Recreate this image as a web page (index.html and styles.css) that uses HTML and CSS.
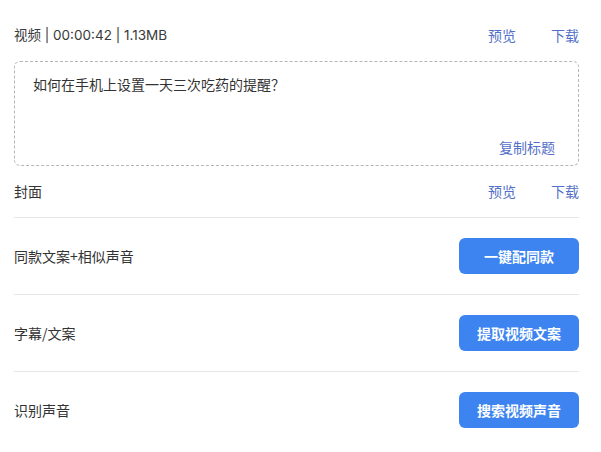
FILE: index.html
```html
<!DOCTYPE html>
<html lang="zh">
<head>
<meta charset="utf-8">
<link rel="stylesheet" href="styles.css">
</head>
<body>
<div class="panel">
  <div class="head-row">
    <span class="meta">视频 | 00:00:42 | 1.13MB</span>
    <div class="links"><a class="link">预览</a><a class="link">下载</a></div>
  </div>
  <div class="title-box">
    <p class="title-text">如何在手机上设置一天三次吃药的提醒？</p>
    <a class="link copy">复制标题</a>
  </div>
  <div class="cover-row">
    <span class="label">封面</span>
    <div class="links"><a class="link">预览</a><a class="link">下载</a></div>
  </div>
  <div class="row">
    <span class="label">同款文案+相似声音</span>
    <button class="btn">一键配同款</button>
  </div>
  <div class="row">
    <span class="label">字幕/文案</span>
    <button class="btn">提取视频文案</button>
  </div>
  <div class="row">
    <span class="label">识别声音</span>
    <button class="btn">搜索视频声音</button>
  </div>
</div>
</body>
</html>
```
FILE: styles.css
```css
html, body {
  margin: 0;
  padding: 0;
  background: #ffffff;
}
body {
  font-family: "Noto Sans CJK SC", "Noto Sans", sans-serif;
  color: #333333;
  font-size: 14px;
}
.panel {
  width: 565px;
  margin-left: 14px;
  padding-top: 22px;
}
.head-row, .cover-row, .row {
  display: flex;
  align-items: center;
  justify-content: space-between;
}
.head-row {
  height: 26px;
  margin-bottom: 13px;
}
.meta {
  font-family: Inter, "Noto Sans CJK SC", sans-serif;
  font-size: 13.5px;
  line-height: 20px;
  color: #3a3a3a;
}
.links {
  display: flex;
  gap: 35px;
}
.link {
  color: #5370c8;
  font-size: 14px;
  line-height: 20px;
  cursor: pointer;
}
.title-box {
  box-sizing: border-box;
  height: 105px;
  border: 1px dashed #b5b5b5;
  border-radius: 6px;
  padding: 12px 23px 8px 18px;
  display: flex;
  flex-direction: column;
  justify-content: space-between;
}
.title-text {
  margin: 0;
  font-size: 14px;
  line-height: 20px;
  color: #333333;
}
.copy {
  align-self: flex-end;
}
.cover-row {
  padding: 15px 0 16px;
  border-bottom: 1px solid #e6e6e6;
}
.label {
  font-size: 14px;
  line-height: 20px;
}
.row {
  padding: 20px 0;
  border-bottom: 1px solid #e6e6e6;
}
.row:last-child {
  border-bottom: none;
}
.btn {
  width: 120px;
  height: 36px;
  border: none;
  border-radius: 6px;
  background: #3d84f0;
  color: #ffffff;
  font-family: "Noto Sans CJK SC", sans-serif;
  font-size: 14px;
  font-weight: 700;
  padding: 0;
  cursor: pointer;
}
```
